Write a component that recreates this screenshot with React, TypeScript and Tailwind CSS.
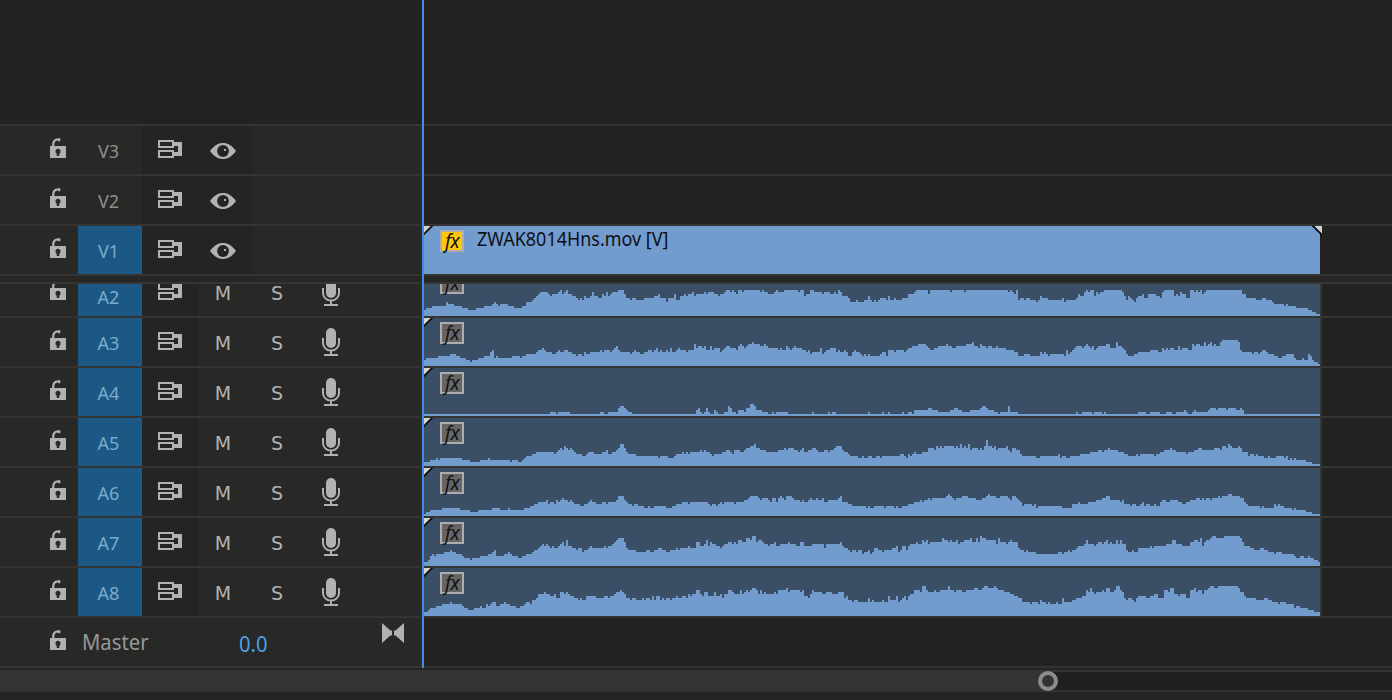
import clsx from "clsx";
import React from "react";

// Level changes, written as column:level. Every chunk covers 150 columns.
const WAVE_CHUNK = 150;
const WAVE_START = 2;
const WAVE_END = 450;

const WAVES: Record<string, string[]> = {
	A2: [
		"2:3 3:4 6:5 13:7 14:6 17:5 21:4 24:3 28:4 32:5 36:6 37:7 38:6 39:5 40:6 44:5 47:4 51:5 53:7 56:8 57:9 58:10 59:11 60:12 64:11 65:10 66:11 69:12 70:13 71:11 72:12 73:13 74:11 76:10 78:9 79:8 80:9 81:8 82:10 83:9 85:10 86:12 87:10 89:9 91:11 92:10 93:12 94:10 95:11 96:12 99:13 102:11 103:9 105:8 106:9 108:8 112:9 117:10 119:11 120:9 123:7 124:9 127:11 128:8 130:10 132:11 133:10 134:11 136:12 137:10 138:11 142:12 143:11 144:12 147:11 149:10",
		"0:11 2:12 3:13 5:12 6:13 7:12 8:11 9:13 11:12 12:13 20:12 21:13 22:12 24:11 27:12 28:13 29:12 32:13 39:12 40:13 42:10 43:11 45:13 47:12 51:11 52:12 55:11 57:12 58:11 59:13 60:12 61:10 64:9 65:7 68:8 69:7 72:8 74:10 75:8 76:7 77:8 78:7 79:8 80:9 83:8 84:10 85:8 87:9 88:8 91:9 94:11 97:12 98:13 104:11 105:13 115:12 116:13 122:12 123:13 144:12 145:13 146:12 147:11 148:13 149:8",
		"0:9 2:8 3:9 5:8 8:7 9:8 10:10 11:9 14:8 21:9 22:7 23:8 28:9 29:11 30:10 32:12 33:13 34:12 35:13 37:10 38:12 39:11 40:12 42:13 51:12 52:10 53:8 54:10 55:9 56:8 57:7 58:9 59:10 61:11 62:9 64:11 68:10 70:9 71:12 72:13 77:10 78:11 79:10 80:12 81:11 83:9 85:13 87:12 88:13 89:12 90:13 91:11 92:12 93:13 111:11 113:9 118:8 121:9 123:8 126:7 127:6 132:5 133:6 134:5 138:4 144:3 146:2 148:1",
	],
	A3: [
		"2:3 3:4 9:5 15:6 18:5 20:4 23:3 25:2 26:3 29:4 32:5 35:7 36:8 37:4 38:5 39:4 46:5 50:4 51:5 53:6 58:7 59:8 61:9 62:8 63:7 66:6 68:7 69:8 70:7 72:8 74:7 76:6 78:5 79:6 81:5 82:7 83:6 85:7 90:8 91:7 92:8 95:7 96:8 97:9 98:10 99:8 100:7 105:6 106:7 107:8 108:7 110:6 112:7 114:8 116:7 117:8 118:9 119:7 120:8 121:7 123:8 124:7 125:9 126:7 128:8 129:9 130:8 133:7 134:8 137:11 138:9 139:10 141:9 142:10 143:8 145:10 146:8 147:9",
		"0:7 1:8 2:9 3:10 5:9 8:8 9:10 10:11 11:10 12:9 13:10 14:11 16:12 17:11 20:10 22:11 23:10 24:9 29:8 30:9 31:8 33:10 34:9 35:8 36:9 37:10 38:9 41:8 43:7 44:8 45:6 46:7 50:9 51:6 52:7 53:8 55:9 58:7 59:8 60:7 62:8 63:7 64:5 66:7 67:8 68:7 70:6 71:5 72:6 73:5 74:6 75:5 80:6 81:7 83:5 84:8 87:7 88:8 92:7 93:8 94:9 96:10 99:11 103:10 104:9 105:8 107:9 109:10 113:11 114:10 116:9 118:10 123:11 126:12 127:10 129:9 130:11 131:10 133:9 134:10 136:9 138:10 139:9 143:8 147:7 149:5",
		"0:5 2:6 5:5 10:7 11:6 12:7 13:6 14:5 15:6 22:5 23:8 24:6 25:7 26:8 27:9 28:10 31:9 32:10 33:11 34:10 35:9 36:10 37:8 38:9 39:10 43:11 45:9 48:12 49:10 51:9 52:8 53:6 54:5 57:6 59:7 65:8 69:7 71:9 72:8 73:9 74:8 75:9 77:8 79:10 80:8 81:9 84:8 86:11 87:10 88:11 90:10 92:12 93:10 94:11 95:12 96:10 97:11 98:10 100:12 101:13 109:12 110:8 111:7 116:6 117:7 119:6 120:7 121:8 123:7 124:6 127:5 129:4 131:5 133:6 137:4 138:3 141:4 142:3 144:6 145:5 146:3 147:2 149:1",
	],
	A4: [
		"2:1 65:2 68:1 69:2 75:1 90:2 92:1 94:2 99:4 100:5 102:4 103:3 104:2 106:1 138:3 139:4 140:2 141:1 142:2 143:4 144:2 145:1 147:3 148:2 149:1",
		"0:1 2:2 4:5 5:4 6:2 8:1 9:3 12:2 13:4 15:6 17:5 18:3 21:2 24:1 26:2 27:1 28:2 34:1 46:2 47:1 54:2 55:1 56:2 58:1 74:2 75:1 81:2 82:1 84:2 85:1 91:2 92:1 94:2 96:1 97:3 104:4 106:3 109:2 115:3 117:4 119:3 121:2 125:3 130:4 131:5 133:4 134:3 137:2 139:1 140:2 144:5 145:2 149:1",
		"0:1 28:2 29:1 31:2 36:1 37:2 41:1 42:2 43:1 59:2 63:1 65:2 70:1 73:2 76:1 78:2 82:3 83:2 84:1 86:2 87:3 88:2 94:3 95:4 98:3 99:4 103:3 104:4 108:3 110:4 111:3 112:1",
	],
	A5: [
		"2:2 5:3 8:4 9:3 10:4 21:3 25:2 30:3 34:4 35:3 45:2 46:3 49:2 51:3 52:4 53:5 56:6 58:7 67:6 68:7 69:8 70:9 71:8 72:10 73:9 74:8 75:9 76:8 77:7 78:6 81:5 83:6 84:7 87:6 91:7 93:8 94:6 96:7 98:8 99:9 100:11 102:9 103:7 104:6 108:5 119:4 120:5 124:4 127:5 128:6 131:7 132:6 133:7 134:6 135:7 140:8 141:7 142:8 143:7 145:6 146:5 147:6",
		"0:6 1:7 3:8 5:7 6:6 7:8 10:7 12:8 13:9 15:10 17:11 18:9 20:8 23:7 29:8 32:9 33:8 34:9 37:8 39:7 40:8 41:9 42:7 44:8 46:9 48:8 49:7 52:8 54:7 55:8 57:9 58:10 61:8 62:7 64:6 65:5 69:4 71:5 72:4 74:5 76:4 78:5 80:4 81:5 90:6 92:5 93:4 94:6 95:5 96:6 97:7 98:6 101:7 104:9 107:8 108:10 109:9 110:10 111:9 112:10 117:9 118:10 119:9 120:11 121:9 122:10 123:9 124:11 125:8 126:9 129:8 130:9 131:8 132:10 133:13 134:10 136:9 137:10 138:8 139:9 143:10 144:8 145:7 146:9 148:8",
		"0:6 1:5 8:4 10:5 19:6 20:4 21:5 23:4 25:5 30:6 35:7 39:8 41:7 42:8 44:9 45:8 49:7 52:6 54:5 58:6 59:5 60:6 67:5 68:6 70:7 72:8 75:9 76:8 78:7 83:6 84:7 87:8 89:9 91:8 97:9 100:8 101:10 103:9 104:11 105:10 106:9 109:10 110:9 111:7 114:5 115:6 117:5 118:6 119:5 122:4 124:5 125:4 128:5 132:4 133:5 134:3 135:4 136:3 137:4 138:3 143:2 146:1",
	],
	A6: [
		"2:1 3:2 5:3 11:4 20:3 25:2 29:3 36:4 40:3 44:4 45:3 52:4 55:5 57:6 59:7 63:8 64:6 65:7 67:6 68:8 69:7 70:8 71:9 72:8 74:7 75:8 76:7 77:6 80:5 82:6 84:7 85:8 86:7 88:6 91:7 93:6 94:7 98:8 99:10 102:8 103:7 104:6 106:5 107:6 109:5 112:4 114:5 115:4 117:5 123:4 126:5 128:6 131:7 134:6 135:7 144:6 145:5 146:6 148:5 149:6",
		"0:7 1:6 2:7 7:6 8:7 12:8 14:9 15:10 19:9 20:8 21:9 24:8 25:7 26:9 28:7 29:9 30:10 31:9 32:8 33:10 36:9 37:8 40:7 41:8 42:7 44:8 45:9 46:8 48:9 49:8 51:9 52:7 54:8 59:9 60:10 61:7 64:6 66:5 73:4 74:5 75:4 77:5 82:4 83:5 87:4 88:5 89:4 91:5 94:6 97:7 100:8 101:7 102:8 104:9 105:8 106:9 113:10 114:11 115:10 116:9 117:8 118:9 121:10 124:9 128:8 131:9 133:10 134:11 135:10 138:9 140:10 144:9 145:8 146:10 148:9 149:8",
		"0:7 1:5 2:6 6:5 7:6 8:4 9:5 21:4 26:6 29:7 30:6 34:7 38:8 41:9 43:10 45:8 50:7 51:8 52:6 55:5 56:6 58:5 60:6 61:7 62:5 63:6 65:5 67:6 68:5 70:7 71:8 73:7 75:8 79:7 81:6 83:7 85:8 88:9 90:8 91:9 92:8 93:9 95:8 96:9 99:10 100:9 101:10 104:11 106:10 110:9 112:7 113:6 114:5 120:4 121:5 122:4 127:6 128:5 129:6 130:5 132:4 136:3 137:4 138:3 143:2 146:1",
	],
	A7: [
		"2:2 4:3 5:5 6:6 7:5 8:6 12:7 15:8 16:7 18:6 21:5 22:4 25:3 26:4 30:5 34:6 36:7 37:8 38:5 42:6 44:7 45:6 46:5 49:4 51:5 53:6 56:7 57:8 59:9 60:10 61:11 62:10 63:11 64:10 65:9 66:10 67:9 69:10 70:11 71:12 72:10 73:13 74:10 76:9 78:8 79:9 81:7 82:8 84:9 85:10 86:9 92:10 93:9 94:10 96:11 97:12 98:13 99:14 102:12 103:9 104:8 108:7 113:8 115:7 117:8 119:9 121:8 123:7 125:8 128:9 129:8 130:9 134:10 135:9 138:12 140:10 142:11 143:13 144:10 145:12 146:11 148:10",
		"0:9 1:10 2:11 4:12 6:11 7:12 8:11 9:13 11:12 13:14 15:13 16:15 18:12 19:13 21:12 22:11 24:10 25:11 27:12 28:10 30:11 34:12 35:11 38:10 40:12 42:10 46:11 52:9 53:11 60:12 61:10 62:9 64:8 65:7 66:8 68:7 69:8 71:6 72:7 74:8 75:6 76:7 77:9 79:8 81:7 82:8 86:9 88:10 89:7 90:8 91:10 93:8 94:10 95:11 98:12 99:11 101:13 102:12 103:13 104:11 105:12 111:14 112:13 114:12 115:13 116:12 118:13 119:11 120:12 122:13 125:14 126:12 128:14 129:12 130:15 131:14 133:13 138:11 139:14 140:12 143:11 144:12 145:13 146:12 149:9",
		"0:8 2:7 3:8 4:7 8:6 19:7 21:6 22:7 24:8 25:7 26:8 28:9 29:10 32:11 33:13 34:11 37:10 38:11 39:12 41:11 42:12 43:13 44:11 45:12 46:11 48:13 49:11 50:13 51:11 53:8 54:7 56:8 57:7 59:9 65:10 66:9 67:10 73:11 76:13 78:11 81:10 85:12 87:13 89:12 90:14 91:10 92:12 93:13 95:14 96:15 98:14 102:15 110:14 111:12 112:10 115:9 117:8 120:9 122:8 124:7 127:6 128:7 131:6 137:5 138:4 140:5 142:4 144:5 145:4 147:3 149:2",
	],
	A8: [
		"2:2 4:3 5:4 8:5 11:6 15:7 16:6 21:5 22:4 24:3 27:4 30:5 31:4 33:6 34:5 35:6 36:7 38:5 40:6 42:7 43:6 45:5 48:4 50:5 52:6 53:7 55:6 56:8 58:9 59:11 62:12 63:11 65:10 67:11 68:9 70:12 72:11 73:12 74:11 75:10 77:9 79:8 80:9 81:8 83:10 88:9 92:10 94:9 95:10 97:11 98:12 100:13 101:12 102:11 103:9 105:8 106:9 108:8 111:9 112:8 113:9 115:8 116:10 117:8 118:10 120:8 121:9 122:8 123:9 125:8 126:9 128:10 129:9 131:10 133:9 134:11 135:10 136:11 138:13 140:11 141:10 142:12 144:10 147:12 148:10",
		"0:11 1:9 2:11 4:13 6:12 7:11 10:13 11:11 12:12 13:13 14:12 15:13 16:14 18:13 19:11 20:13 21:11 22:12 23:11 27:12 28:11 29:13 33:14 34:12 35:13 40:12 41:13 42:10 44:9 45:11 46:13 47:12 51:11 53:12 56:11 59:12 62:9 63:10 64:8 66:7 67:8 69:7 74:9 75:7 76:8 77:7 81:8 82:7 84:10 85:8 88:10 89:7 90:8 91:9 92:10 93:8 94:10 95:11 97:13 100:12 101:15 103:13 104:12 107:13 108:12 110:13 114:15 115:13 117:12 118:13 121:12 123:13 127:14 129:13 131:14 132:15 134:14 137:15 138:14 139:13 142:12 145:11 147:10 149:9",
		"0:9 1:7 5:6 6:7 9:6 10:8 11:7 13:6 14:7 15:6 18:7 19:6 21:9 22:7 26:8 28:9 31:10 33:13 34:12 35:14 36:12 37:11 38:12 41:13 42:12 43:14 45:12 47:13 48:15 50:13 51:12 52:9 53:8 54:9 56:8 57:7 58:9 59:10 63:9 65:10 67:11 69:9 72:13 74:12 75:14 77:11 79:10 80:11 83:9 85:13 87:14 88:12 89:13 91:11 92:13 94:14 95:15 97:14 99:15 109:14 110:12 112:10 113:9 118:8 122:9 124:8 126:7 129:6 130:7 133:6 137:4 138:5 140:4 144:3 147:2",
	],
};

const wavePath = (chunks: string[]) => {
	let d = "M0 48";
	chunks.forEach((chunk, i) => {
		chunk.split(" ").forEach((step) => {
			const [column, level] = step.split(":").map(Number);
			const x = (column + i * WAVE_CHUNK - WAVE_START) * 2;
			d += `H${x}V${48 - level * 2}`;
		});
	});
	return d + `H${(WAVE_END - WAVE_START) * 2}V48Z`;
};

const LockIcon = ({ className = "" }: { className?: string }) => (
	<svg className={clsx("shrink-0", className)} width="16" height="20" viewBox="0 0 16 20">
		<path d="M3.2 9V6.8C3.2 3.4 5 1.3 8 1.3h1.2v1.9" fill="none" stroke="#b2b2b1" strokeWidth="2.2" />
		<path d="M0 8h16v12H0z" fill="#b2b2b1" />
		<path d="M8 10.8a2.7 2.7 0 0 0-1.3 5V18h2.6v-2.2A2.7 2.7 0 0 0 8 10.8z" fill="#282827" />
	</svg>
);

const SyncIcon = () => (
	<svg className="ml-4 mt-[14px] shrink-0" width="24" height="18" viewBox="0 0 24 18">
		<path d="M1 1h14v6H1zM1 11h14v6H1z" fill="none" stroke="#b2b2b1" strokeWidth="2" />
		<path d="M16 2h8v14h-8v-4h4V6h-4z" fill="#b2b2b1" />
	</svg>
);

const EyeIcon = () => (
	<svg className="ml-3 mt-[17px] shrink-0" width="26" height="16" viewBox="0 0 26 16">
		<path d="M0 8C4 2.6 8.2 0 13 0s9 2.6 13 8c-4 5.4-8.2 8-13 8S4 13.4 0 8z" fill="#b2b2b1" />
		<circle cx="13" cy="8" r="5.9" fill="#232322" />
		<path d="M14 6h2v2h-2z" fill="#b2b2b1" />
	</svg>
);

const MicIcon = () => (
	<svg className="ml-[39px] mt-[10px] shrink-0" width="20" height="28" viewBox="0 0 20 28">
		<rect x="5" y="0" width="10" height="20" rx="5" fill="#b2b2b1" />
		<path d="M2 10v5a8 7.6 0 0 0 16 0v-5M10 22.5V27M3 27h14" fill="none" stroke="#b2b2b1" strokeWidth="2" />
	</svg>
);

const KeyframeIcon = () => (
	<svg className="ml-auto mr-4 mt-[5px] shrink-0" width="22" height="20" viewBox="0 0 22 20">
		<path d="M0 0l8.4 7.5H10v5H8.4L0 20zM22 0l-8.4 7.5H12v5h1.6L22 20z" fill="#b2b2b1" />
	</svg>
);

const FxBadge = ({ active = false }: { active?: boolean }) => (
	<div
		className={clsx(
			"ml-4 mt-1 flex h-[22px] w-6 shrink-0 items-center justify-center border-2 border-[#adadad]",
			active ? "bg-[#fdc70c]" : "bg-[#666666]"
		)}
	>
		<span className="text-[19px] italic leading-none tracking-[-0.5px] text-[#111]">fx</span>
	</div>
);

const FadeCorner = ({ right = false }: { right?: boolean }) => (
	<svg
		className={clsx("absolute top-0", right ? "-right-[2px] -scale-x-100" : "left-0")}
		width="10"
		height="10"
		viewBox="0 0 10 10"
	>
		<path d="M0 0h8L0 8z" fill="#d2d2d0" />
		<path d={right ? "M10 -1L-1 10" : "M9 -1L-1 9"} stroke="#0b0b0b" strokeWidth="1.8" />
	</svg>
);

interface TrackProps {
	name: string;
	targeted?: boolean;
	clipped?: boolean;
}

const TrackName: React.FC<TrackProps> = ({ name, targeted, clipped }) => (
	<div
		className={clsx(
			"ml-3 flex h-12 w-16 shrink-0 justify-center text-[18px] leading-6",
			targeted ? "bg-[#1c5886] text-[#7baacb]" : "text-[#8f8f8e]",
			clipped ? "pt-[17px]" : "pt-[13px]"
		)}
	>
		<span className="-ml-[3px]">{name}</span>
	</div>
);

const VideoTrack: React.FC<TrackProps> = ({ name, targeted }) => (
	<div className="flex h-[50px] border-t-2 border-[#343433]">
		<div className="flex w-[422px] shrink-0 border-r-2 border-[#2d2d2c] bg-[#282827]">
			<LockIcon className="ml-[50px] mt-3" />
			<TrackName name={name} targeted={targeted} />
			<div className="flex w-[110px] bg-[#242423]">
				<SyncIcon />
				<div className="ml-4 flex">
					<EyeIcon />
				</div>
			</div>
		</div>
		{targeted && (
			<div className="relative ml-[2px] flex w-[896px] bg-[#729bce]">
				<FadeCorner />
				<FxBadge active />
				<span className="ml-[13px] mt-[1px] origin-left scale-x-[0.945] text-[19px] leading-6 text-[#0c1117]">
					ZWAK8014Hns.mov [V]
				</span>
				<FadeCorner right />
			</div>
		)}
	</div>
);

const AudioTrack: React.FC<TrackProps> = ({ name, clipped }) => (
	<div
		className={clsx(
			"flex items-end overflow-hidden border-t-2 border-[#343433]",
			clipped ? "h-[34px]" : "h-[50px]"
		)}
	>
		<div className="flex h-12 w-[422px] shrink-0 border-r-2 border-[#2d2d2c] bg-[#282827]">
			<LockIcon className="ml-[50px] mt-3" />
			<TrackName name={name} targeted clipped={clipped} />
			<div className="flex w-14 shrink-0 bg-[#242423]">
				<SyncIcon />
			</div>
			<span className="mt-4 w-[50px] text-center font-['DejaVu_Sans',sans-serif] text-[19px] leading-[19px] text-[#b2b2b1]">
				M
			</span>
			<span className="mt-4 w-[58px] text-center font-['DejaVu_Sans',sans-serif] text-[19px] leading-[19px] text-[#b2b2b1]">
				S
			</span>
			<div className="-ml-6 flex">
				<MicIcon />
			</div>
		</div>
		<div className="relative ml-[2px] flex h-12 w-[898px] shrink-0 border-r-2 border-[#343433] bg-[#3a4e66]">
			<svg className="absolute left-0 top-0" width="896" height="48" viewBox="0 0 896 48" shapeRendering="crispEdges">
				<path d={wavePath(WAVES[name])} fill="#729bce" />
			</svg>
			<FadeCorner />
			<FxBadge />
		</div>
	</div>
);

const MasterTrack = () => (
	<div className="flex h-[50px] border-t-2 border-[#343433]">
		<div className="flex w-[422px] shrink-0 border-r-2 border-[#2d2d2c] bg-[#282827]">
			<LockIcon className="ml-[50px] mt-3" />
			<span className="ml-4 w-[157px] origin-left scale-x-[0.92] pt-[7px] text-[22px] leading-8 text-[#989897]">
				Master
			</span>
			<span className="origin-left scale-x-[0.92] pt-[9px] text-[22px] leading-8 text-[#4ba0e0]">0.0</span>
			<KeyframeIcon />
		</div>
	</div>
);

const ZoomBar = () => (
	<div className="mt-[2px] flex h-[22px]">
		<div className="relative w-[1048px] bg-[#333332]">
			<div className="absolute -right-[10px] top-[1px] size-5 rounded-full border-4 border-[#8c8c8a] bg-[#333332]" />
		</div>
		<div className="flex-1 border-y-2 border-[#333332] bg-[#1f1f1d]" />
	</div>
);

export default function App() {
	return (
		<div className="h-[700px] w-[1392px] overflow-hidden bg-[#242423] font-['Noto_Sans','Open_Sans',sans-serif]">
			<div className="relative h-[668px] border-b-2 border-[#343433] bg-[#222220]">
				<div className="h-[124px]" />
				{/* VIDEO */}
				<VideoTrack name="V3" />
				<VideoTrack name="V2" />
				<VideoTrack name="V1" targeted />
				<div className="h-2 border-t-2 border-[#343433] bg-[#262625]" />
				{/* AUDIO */}
				<AudioTrack name="A2" clipped />
				<AudioTrack name="A3" />
				<AudioTrack name="A4" />
				<AudioTrack name="A5" />
				<AudioTrack name="A6" />
				<AudioTrack name="A7" />
				<AudioTrack name="A8" />
				<MasterTrack />
				{/* PLAYHEAD */}
				<div className="absolute -bottom-[2px] left-[422px] top-0 w-[2px] bg-[#408de8]" />
			</div>
			<ZoomBar />
		</div>
	);
}
